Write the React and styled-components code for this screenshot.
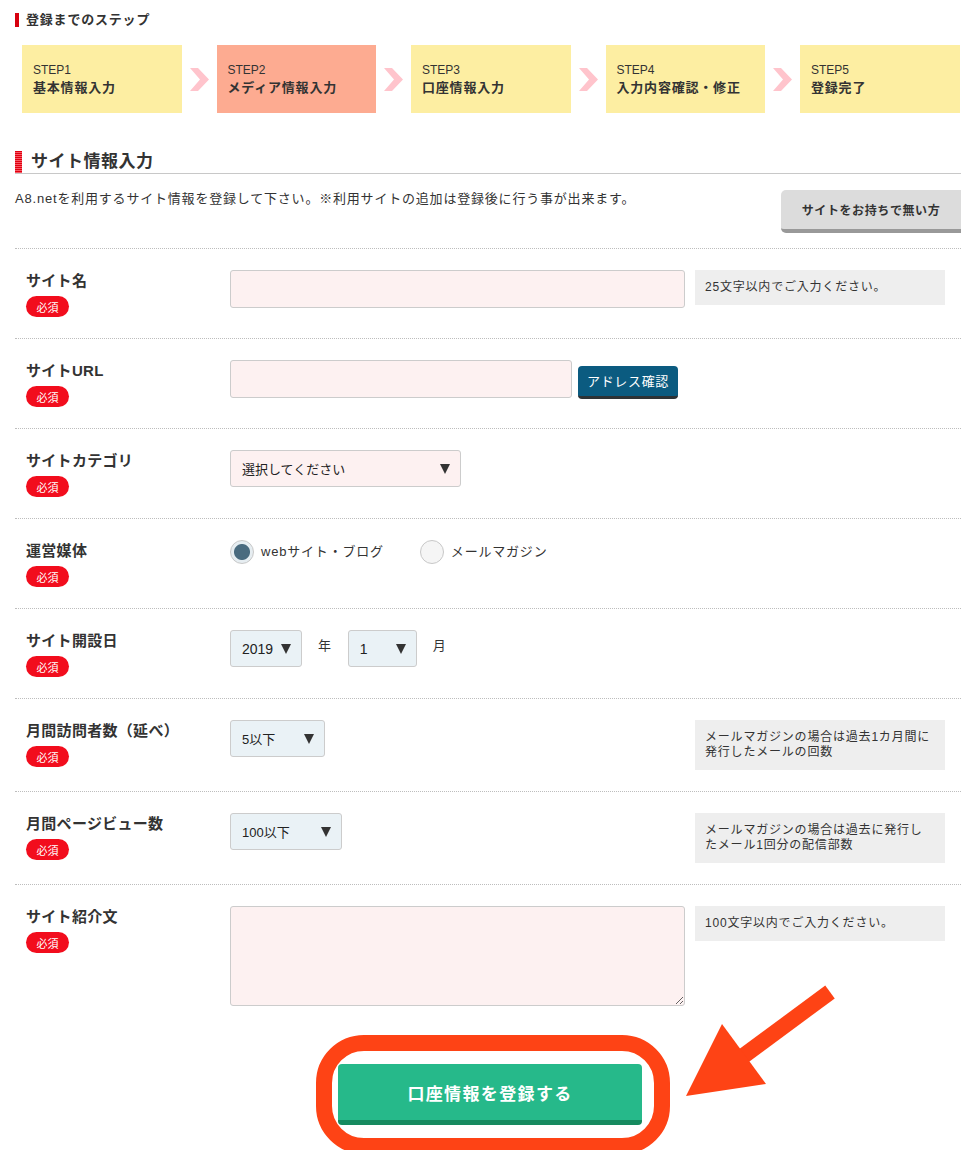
import React from 'react'
import styled, {createGlobalStyle} from 'styled-components'

const GlobalStyle = createGlobalStyle`
  * { box-sizing: border-box; }
  body {
    margin: 0;
    background: #fff;
    color: #333;
    font-family: "Liberation Sans", "Noto Sans CJK JP", sans-serif;
    letter-spacing: 0.05em;
  }
`

const Page = styled.div`
  position: relative;
  width: 961px;
  min-height: 1150px;
  padding: 12px 0 0 15px;
  overflow: hidden;
`

const StepsTitle = styled.h2`
  display: flex;
  align-items: center;
  gap: 7px;
  margin: 0;
  font-size: 13px;
  line-height: 16px;
  font-weight: 700;
  &::before {
    content: '';
    width: 4px;
    height: 14px;
    background: #d7000f;
  }
`

const StepList = styled.ol`
  display: flex;
  align-items: center;
  list-style: none;
  margin: 17px 0 0;
  padding: 0 0 0 7px;
`

const StepBox = styled.li`
  width: 159.5px;
  height: 68px;
  flex-shrink: 0;
  display: flex;
  flex-direction: column;
  justify-content: center;
  padding: 0 11px;
  background: ${p => (p.$active ? '#fdab91' : '#fdeea2')};
`

const StepNum = styled.span`
  font-size: 12px;
  line-height: 15px;
  letter-spacing: 0;
`

const StepName = styled.span`
  font-size: 13px;
  line-height: 17px;
  font-weight: 700;
  margin-top: 1px;
`

const Chevron = styled.li`
  width: 35px;
  flex-shrink: 0;
  display: flex;
  justify-content: center;
`

const SectionHead = styled.h3`
  display: flex;
  align-items: center;
  gap: 9px;
  margin: 38px 0 0;
  border-bottom: 1px solid #c8c8c8;
  font-size: 17px;
  line-height: 22px;
  font-weight: 700;
  letter-spacing: 0.03em;
  &::before {
    content: '';
    width: 7px;
    height: 22px;
    background: repeating-linear-gradient(#e1000f 0 1px, #f75a66 1px 2px);
  }
`

const Intro = styled.div`
  display: flex;
  justify-content: space-between;
  align-items: flex-start;
  margin-top: 16px;
  padding-bottom: 15px;
`

const IntroText = styled.p`
  margin: 1px 0 0;
  font-size: 13px;
  line-height: 16px;
`

const NoSiteButton = styled.button`
  width: 180px;
  height: 43px;
  flex-shrink: 0;
  border: none;
  border-bottom: 4px solid #999;
  border-radius: 5px 0 0 5px;
  background: #dcdcdc;
  color: #333;
  font-family: inherit;
  font-size: 12px;
  font-weight: 700;
  letter-spacing: 0.05em;
  padding: 0;
`

const Row = styled.div`
  display: flex;
  align-items: flex-start;
  border-top: 1px dotted #bdbdbd;
  padding: 21px 16px ${p => (p.$last ? '0' : '21px')} 0;
`

const LabelCol = styled.div`
  width: 215px;
  flex-shrink: 0;
  padding-left: 11px;
`

const Label = styled.div`
  font-size: 15px;
  line-height: 22px;
  font-weight: 700;
  letter-spacing: 0.02em;
`

const Badge = styled.span`
  display: flex;
  align-items: center;
  justify-content: center;
  width: 43px;
  height: 21px;
  margin-top: 4px;
  border-radius: 11px;
  background: #f20d1d;
  color: #fff;
  font-size: 11px;
  letter-spacing: 0;
`

const Field = styled.div`
  flex: 1;
  display: flex;
  align-items: ${p => p.$align || 'flex-start'};
`

const TextInput = styled.input`
  width: ${p => p.$w}px;
  height: 38px;
  border: 1px solid #ccc;
  border-radius: 3px;
  background: #fdf1f1;
  outline: none;
`

const TextArea = styled.textarea`
  width: 455px;
  height: 100px;
  border: 1px solid #ccc;
  border-radius: 3px;
  background: #fdf1f1;
  outline: none;
  display: block;
`

const Hint = styled.div`
  width: 250px;
  margin-left: auto;
  padding: 10px;
  background: #eee;
  font-size: 12px;
  line-height: 15px;
`

const CheckButton = styled.button`
  height: 33px;
  width: 100px;
  margin: 6px 0 0 6px;
  border: none;
  border-bottom: 3px solid #2d3336;
  border-radius: 4px;
  background: #0b5b80;
  color: #fff;
  font-family: inherit;
  font-size: 13px;
  letter-spacing: 0.05em;
  padding: 0 0 2px;
`

const SelectBox = styled.div`
  width: ${p => p.$w}px;
  height: 37px;
  display: flex;
  align-items: center;
  justify-content: space-between;
  padding: 0 10px 0 11px;
  border: 1px solid #ccc;
  border-radius: 3px;
  background: ${p => p.$bg || '#eaf2f6'};
  color: #222;
  font-size: ${p => p.$fs || 13}px;
  letter-spacing: 0;
  &::after {
    content: '';
    border-left: 5px solid transparent;
    border-right: 5px solid transparent;
    border-top: 10px solid #333;
  }
`

const Unit = styled.span`
  margin: 0 16px;
  font-size: 13px;
  line-height: 14px;
  padding-bottom: 6px;
`

const RadioOption = styled.label`
  display: flex;
  align-items: center;
  gap: 7px;
  margin-right: 36px;
  font-size: 13px;
  line-height: 24px;
`

const RadioCircle = styled.span`
  width: 24px;
  height: 24px;
  border-radius: 50%;
  border: 1px solid #c8c8c8;
  background: ${p =>
    p.$checked
      ? 'radial-gradient(circle, #4a6b7f 0 7.5px, #e6edf1 8.5px)'
      : '#f5f5f5'};
`

const SubmitArea = styled.div`
  position: relative;
  display: flex;
  justify-content: center;
  margin-top: 29px;
  padding-left: 10px;
`

const Highlight = styled.div`
  border: 16px solid #fe4315;
  border-radius: 48px;
  padding: 13px 12px 13px 6px;
`

const SubmitButton = styled.button`
  display: block;
  width: 304px;
  height: 61px;
  border: none;
  border-bottom: 5px solid #168a5f;
  border-radius: 4px;
  background: #26b98a;
  color: #fff;
  font-family: inherit;
  font-size: 17px;
  font-weight: 700;
  letter-spacing: 0.08em;
`

const Arrow = styled.svg`
  position: absolute;
  left: 680px;
  top: 983px;
  pointer-events: none;
`

const steps = [
  ['STEP1', '基本情報入力'],
  ['STEP2', 'メディア情報入力'],
  ['STEP3', '口座情報入力'],
  ['STEP4', '入力内容確認・修正'],
  ['STEP5', '登録完了'],
]

const ChevronIcon = () => (
  <svg width="19" height="23" viewBox="0 0 19 23">
    <polygon points="0,0 8,0 19,11.5 8,23 0,23 10,11.5" fill="#ffc4cc" />
  </svg>
)

const Required = ({children}) => (
  <LabelCol>
    <Label>{children}</Label>
    <Badge>必須</Badge>
  </LabelCol>
)

export default function App() {
  return (
    <Page>
      <GlobalStyle />
      <StepsTitle>登録までのステップ</StepsTitle>
      <StepList>
        {steps.map(([num, name], i) => (
          <React.Fragment key={num}>
            {i > 0 && (
              <Chevron>
                <ChevronIcon />
              </Chevron>
            )}
            <StepBox $active={i === 1}>
              <StepNum>{num}</StepNum>
              <StepName>{name}</StepName>
            </StepBox>
          </React.Fragment>
        ))}
      </StepList>

      <SectionHead>サイト情報入力</SectionHead>
      <Intro>
        <IntroText>A8.netを利用するサイト情報を登録して下さい。※利用サイトの追加は登録後に行う事が出来ます。</IntroText>
        <NoSiteButton>サイトをお持ちで無い方</NoSiteButton>
      </Intro>

      <Row>
        <Required>サイト名</Required>
        <Field>
          <TextInput $w={455} />
          <Hint>25文字以内でご入力ください。</Hint>
        </Field>
      </Row>

      <Row>
        <Required>サイトURL</Required>
        <Field>
          <TextInput $w={342} />
          <CheckButton>アドレス確認</CheckButton>
        </Field>
      </Row>

      <Row>
        <Required>サイトカテゴリ</Required>
        <Field>
          <SelectBox $w={231} $bg="#fdf1f1">選択してください</SelectBox>
        </Field>
      </Row>

      <Row>
        <Required>運営媒体</Required>
        <Field>
          <RadioOption>
            <RadioCircle $checked />
            webサイト・ブログ
          </RadioOption>
          <RadioOption>
            <RadioCircle />
            メールマガジン
          </RadioOption>
        </Field>
      </Row>

      <Row>
        <Required>サイト開設日</Required>
        <Field $align="center">
          <SelectBox $w={72} $fs={14}>2019</SelectBox>
          <Unit>年</Unit>
          <SelectBox $w={69} $fs={14}>1</SelectBox>
          <Unit>月</Unit>
        </Field>
      </Row>

      <Row>
        <Required>月間訪問者数（延べ）</Required>
        <Field>
          <SelectBox $w={95}>5以下</SelectBox>
          <Hint>
            メールマガジンの場合は過去1カ月間に
            <br />
            発行したメールの回数
          </Hint>
        </Field>
      </Row>

      <Row>
        <Required>月間ページビュー数</Required>
        <Field>
          <SelectBox $w={112}>100以下</SelectBox>
          <Hint>
            メールマガジンの場合は過去に発行し
            <br />
            たメール1回分の配信部数
          </Hint>
        </Field>
      </Row>

      <Row $last>
        <Required>サイト紹介文</Required>
        <Field>
          <TextArea />
          <Hint>100文字以内でご入力ください。</Hint>
        </Field>
      </Row>

      <SubmitArea>
        <Highlight>
          <SubmitButton>口座情報を登録する</SubmitButton>
        </Highlight>
      </SubmitArea>

      <Arrow width="170" height="130" viewBox="0 0 170 130">
        <line x1="150" y1="9" x2="62" y2="74" stroke="#fe4315" strokeWidth="16" />
        <polygon points="6,113 42,41 86,101" fill="#fe4315" />
      </Arrow>
    </Page>
  )
}
